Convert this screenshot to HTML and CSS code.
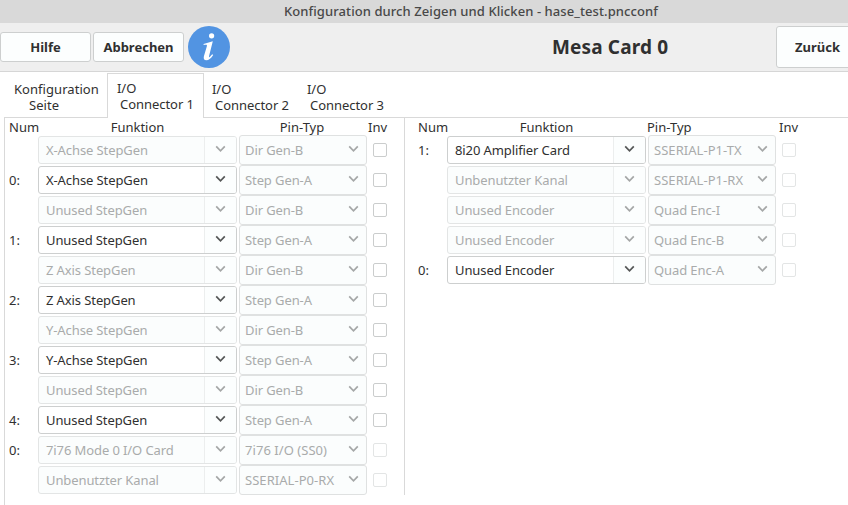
FILE: index.html
```html
<!DOCTYPE html>
<html lang="de">
<head>
<meta charset="utf-8">
<title>Konfiguration durch Zeigen und Klicken - hase_test.pncconf</title>
<link rel="stylesheet" href="styles.css">
</head>
<body>
<div class="titlebar"><span>Konfiguration durch Zeigen und Klicken - hase_test.pncconf</span></div>
<header class="toolbar">
  <button class="btn help">Hilfe</button>
  <button class="btn cancel">Abbrechen</button>
  <svg class="info" viewBox="0 0 42 42" width="42" height="42">
    <circle cx="21" cy="21" r="21" fill="#5294e2"/>
    <circle cx="23.6" cy="9.8" r="2.6" fill="#fff"/>
    <path d="M15.6 17.9 L24.8 15.2 L21.2 29.4 C20.8 31.2 21.2 31.6 22.2 30.6 L24.2 28.2 L25.2 28.9 C22.7 32.7 20.6 34.3 18.4 34.3 C16.2 34.3 15.3 32.6 15.9 30.2 L18.8 20.4 C19.3 18.6 18.5 18.5 15.6 19.1 Z" fill="#fff"/>
  </svg>
  <h1>Mesa Card 0</h1>
  <button class="btn back">Zurück</button>
</header>
<nav class="tabs">
  <div class="tab first"><span>Konfiguration</span><span class="second">Seite</span></div>
  <div class="tab active"><span>I/O</span><span class="second">Connector 1</span></div>
  <div class="tab"><span>I/O</span><span class="second">Connector 2</span></div>
  <div class="tab last"><span>I/O</span><span class="second">Connector 3</span></div>
</nav>
<main class="page">
  <section class="pane left" id="left"></section>
  <section class="pane right" id="right"></section>
</main>
<script src="pins.js"></script>
</body>
</html>
```
FILE: styles.css
```css
* { box-sizing: border-box; }
body {
  margin: 0;
  height: 505px;
  overflow: hidden;
  display: flex;
  flex-direction: column;
  background: #fff;
  color: #303030;
  font: 13px/16px "Noto Sans", "Open Sans", sans-serif;
  white-space: nowrap;
}
.titlebar {
  height: 23px;
  flex: none;
  padding-left: 284px;
  background: #d9d9d9;
  color: #484848;
  font-weight: 500;
  line-height: 23px;
  letter-spacing: .08px;
}
.toolbar {
  height: 49px;
  flex: none;
  display: flex;
  align-items: center;
  background: #efefef;
  border-bottom: 1px solid #d6d6d6;
}
.btn {
  flex: none;
  height: 30px;
  padding: 0;
  border: 1px solid #cdcfcf;
  border-radius: 3px;
  background: #fcfefe;
  color: #303030;
  font: bold 13px/16px "Noto Sans", sans-serif;
}
.help { width: 91px; }
.cancel { width: 91px; margin-left: 2px; }
.info { flex: none; margin-left: 4px; }
h1 {
  flex: none;
  width: 546px;
  margin: 0;
  padding-left: 322px;
  font-size: 19px;
  line-height: 24px;
  letter-spacing: .15px;
}
.back { width: 83px; height: 42px; }
.tabs {
  height: 46px;
  flex: none;
  display: flex;
  padding-left: 4px;
}
.tab {
  width: 95px;
  padding: 9px 0 0 8px;
  border-bottom: 1px solid #d9d9d9;
}
.tab span { display: block; letter-spacing: -.05px; }
.tab .second { padding-left: 3px; }
.tab.first { width: 103px; padding-left: 10px; }
.tab.first span { letter-spacing: .05px; }
.tab.first .second { padding-left: 15px; }
.tab.active {
  width: 97px;
  margin-top: 1px;
  padding: 6px 0 0 9px;
  border: 1px solid #d9d9d9;
  border-bottom: 0;
}
.tab.last { flex: 1; }
.page {
  flex: 1;
  display: flex;
  align-items: flex-start;
  margin-left: 4px;
  margin-top: -1px;
  padding-top: 1px;
  border-left: 1px solid #d9d9d9;
}
.pane { flex: none; }
.left {
  width: 400px;
  height: 377px;
  padding-left: 4px;
  border-right: 1px solid #d9d9d9;
}
.right { padding-left: 13px; }
.row {
  display: grid;
  grid-template-columns: 29px 199px 128px 14px;
  align-items: center;
  height: 30px;
}
.row .pin { margin-left: 2px; width: 128px; }
.row .check { margin-left: 8px; }
.head {
  display: grid;
  grid-template-columns: 29px 199px 130px 30px;
  height: 17px;
  line-height: 19px;
}
.head .center { text-align: center; }
.head .inv { padding-left: 1px; }
.right .head .typ { text-align: left; padding-left: 1px; }
.right .head .inv { padding-left: 3px; }
.combo {
  display: flex;
  justify-content: space-between;
  align-items: center;
  height: 28px;
  padding-left: 7px;
  border: 1px solid #cdcfcf;
  border-radius: 3px;
  background: #fff;
  letter-spacing: -.1px;
}
.arrow {
  width: 32px;
  height: 26px;
  padding: 8px 0 0 10px;
  border-left: 1px solid #eceeee;
  background: #fcfefe;
  border-radius: 0 2px 2px 0;
}
.arrow svg, .pin svg { display: block; }
.off {
  border-color: #e3e5e5;
  background: #fbfdfd;
  color: #a9abab;
}
.pin { height: 30px; padding: 0 7px 0 5px; border: 1px solid #dfe1e1; }
.pin svg { margin-top: -2px; }
.serial { letter-spacing: .05px; }
.check {
  width: 14px;
  height: 14px;
  border: 1px solid #cbcdcd;
  border-radius: 2px;
  background: #fff;
}
.check.off { border-color: #e3e5e5; background: #fff; }
```
FILE: pins.js
```js
// Rows: [number, function, function enabled, pin type, invert enabled]
const left = [
  ["", "X-Achse StepGen", 0, "Dir Gen-B", 1],
  ["0:", "X-Achse StepGen", 1, "Step Gen-A", 1],
  ["", "Unused StepGen", 0, "Dir Gen-B", 1],
  ["1:", "Unused StepGen", 1, "Step Gen-A", 1],
  ["", "Z Axis StepGen", 0, "Dir Gen-B", 1],
  ["2:", "Z Axis StepGen", 1, "Step Gen-A", 1],
  ["", "Y-Achse StepGen", 0, "Dir Gen-B", 1],
  ["3:", "Y-Achse StepGen", 1, "Step Gen-A", 1],
  ["", "Unused StepGen", 0, "Dir Gen-B", 1],
  ["4:", "Unused StepGen", 1, "Step Gen-A", 1],
  ["0:", "7i76 Mode 0 I/O Card", 0, "7i76 I/O (SS0)", 0],
  ["", "Unbenutzter Kanal", 0, "SSERIAL-P0-RX", 0]
];
const right = [
  ["1:", "8i20 Amplifier Card", 1, "SSERIAL-P1-TX", 0],
  ["", "Unbenutzter Kanal", 0, "SSERIAL-P1-RX", 0],
  ["", "Unused Encoder", 0, "Quad Enc-I", 0],
  ["", "Unused Encoder", 0, "Quad Enc-B", 0],
  ["0:", "Unused Encoder", 1, "Quad Enc-A", 0]
];
const chevron = color =>
  `<svg width="11" height="8" viewBox="0 0 11 8"><path d="M1.2 1.3 L5.5 5.8 L9.8 1.3" fill="none" stroke="${color}" stroke-width="1.7"/></svg>`;

function render(id, rows) {
  const head = `<div class="head"><span>Num</span><span class="center">Funktion</span><span class="center typ">Pin-Typ</span><span class="inv">Inv</span></div>`;
  document.getElementById(id).innerHTML = head + rows.map(([num, fn, on, pin, inv]) => `
    <div class="row">
      <span>${num}</span>
      <div class="combo ${on ? "" : "off"}"><span>${fn}</span><span class="arrow">${chevron(on ? "#555757" : "#a5a7a7")}</span></div>
      <div class="combo off pin"><span class="${/^(SS|7i)/.test(pin) ? "serial" : ""}">${pin}</span>${chevron("#a5a7a7")}</div>
      <span class="check ${inv ? "" : "off"}"></span>
    </div>`).join("");
}
render("left", left);
render("right", right);
```
